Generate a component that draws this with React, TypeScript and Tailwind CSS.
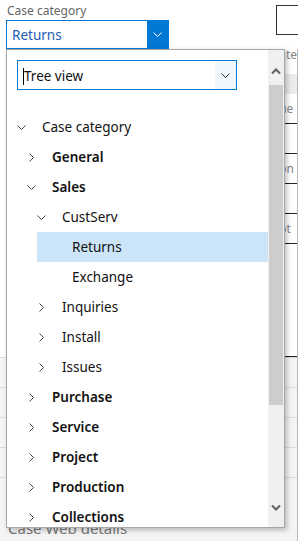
import type { ReactNode } from 'react';

type Node = { label: string; level: number; bold?: boolean; open?: boolean; leaf?: boolean; selected?: boolean };

const tree: Node[] = [
    { label: 'Case category', level: 0, open: true },
    { label: 'General', level: 1, bold: true },
    { label: 'Sales', level: 1, bold: true, open: true },
    { label: 'CustServ', level: 2, open: true },
    { label: 'Returns', level: 3, leaf: true, selected: true },
    { label: 'Exchange', level: 3, leaf: true },
    { label: 'Inquiries', level: 2 },
    { label: 'Install', level: 2 },
    { label: 'Issues', level: 2 },
    { label: 'Purchase', level: 1, bold: true },
    { label: 'Service', level: 1, bold: true },
    { label: 'Project', level: 1, bold: true },
    { label: 'Production', level: 1, bold: true },
    { label: 'Collections', level: 1, bold: true },
];

const indent = ['ml-0', 'ml-[10px]', 'ml-[20px]', 'ml-[30px]'];

function ChevronDown({ className = '' }: { className?: string }) {
    return (
        <svg width="9" height="5" viewBox="0 0 9 5" fill="none" stroke="currentColor" strokeWidth="1" className={className}>
            <polyline points="0.5 0.5 4.5 4.5 8.5 0.5" />
        </svg>
    );
}

function ChevronRight({ className = '' }: { className?: string }) {
    return (
        <svg width="5" height="9" viewBox="0 0 5 9" fill="none" stroke="currentColor" strokeWidth="1" className={className}>
            <polyline points="0.5 0.5 4.5 4.5 0.5 8.5" />
        </svg>
    );
}

function TreeRow({ node }: { node: Node }) {
    let icon: ReactNode = null;
    if (!node.leaf) icon = node.open ? <ChevronDown /> : <ChevronRight className="ml-[2px]" />;
    return (
        <div
            className={`h-[30px] flex items-center pl-[10px] ${indent[node.level]} ${node.selected ? 'bg-[#cce4f7]' : ''}`}
        >
            <span className="w-[25px] flex items-center text-[#444]">{icon}</span>
            <span className={`text-[13.5px] text-[#111] ${node.bold ? 'font-semibold' : ''}`}>{node.label}</span>
        </div>
    );
}

export default function App() {
    return (
        <div className="relative w-[298px] h-[541px] overflow-hidden bg-white font-['Segoe_UI','Noto_Sans',sans-serif]">
            {/* page behind the popup */}
            <div className="flex">
                <div className="w-[276px] pl-[6px] pt-[3px]">
                    <div className="pl-[1px] text-[12px] leading-[16px] text-[#666]">Case category</div>
                    <div className="mt-[1px] w-[163px] h-[29px] border border-[#0078d4] flex items-stretch">
                        <span className="flex-1 pl-[5px] pt-[2px] flex items-center text-[13.5px] text-[#1e5cb3]">Returns</span>
                        <span className="w-[21px] bg-[#0078d4] flex items-center justify-center text-white">
                            <ChevronDown />
                        </span>
                    </div>
                </div>
                <div className="flex-1 mt-[5px] h-[30px] border border-[#333] border-r-0 bg-white" />
            </div>

            <div className="flex h-[308px]">
                <div className="w-[285px]" />
                <div className="flex-1 flex flex-col text-[12px] leading-[12px] text-[#888] border-r border-[#bbb]">
                    <div className="h-[25px]">ate</div>
                    <div className="h-[20px] bg-[#ebebeb]" />
                    <div className="h-[30px] flex items-center border-b border-[#222]">ue</div>
                    <div className="h-[30px] border-b border-[#222]" />
                    <div className="h-[30px] flex items-center border-b border-[#222]">on</div>
                    <div className="h-[30px] border-b border-[#222]" />
                    <div className="h-[30px] flex items-center border-b border-[#222]">ot</div>
                    <div className="flex-1 border-b border-[#222]" />
                </div>
            </div>

            <div className="bg-[#f4f4f4] border-r border-[#bbb] h-[184px]">
                {[0, 1, 2, 3, 4].map((i) => (
                    <div key={i} className="h-[30px] border-t border-[#dcdcdc]" />
                ))}
                <div className="pl-[8px] pt-[11px] text-[15px] leading-[20px] text-[#777]">Case Web details</div>
            </div>

            {/* dropdown popup */}
            <div className="absolute left-[6px] top-[49px] w-[279px] h-[479px] bg-white border border-[#a6a6a6] shadow-[2px_2px_5px_rgba(0,0,0,0.25)] flex overflow-hidden">
                <div className="flex-1 flex flex-col">
                    <div className="pt-[10px] pl-[10px]">
                        <div className="w-[220px] h-[30px] border border-[#0078d4] flex items-stretch">
                            <span className="flex-1 flex items-center pl-[5px] pt-[2px] text-[13.5px] text-[#111]">
                                <span className="w-px h-[17px] bg-black" />
                                Tree view
                            </span>
                            <span className="w-[21px] bg-[#eff6fc] flex items-center justify-center text-[#333]">
                                <ChevronDown />
                            </span>
                        </div>
                    </div>
                    <div className="mt-[22px]">
                        {tree.map((n) => (
                            <TreeRow key={n.label} node={n} />
                        ))}
                    </div>
                </div>
                <div className="w-[16px] flex flex-col bg-[#f0f0f0]">
                    <div className="h-[35px] flex justify-center pt-[18px] text-[#606060]">
                        <svg width="10" height="6" viewBox="0 0 10 6" fill="none" stroke="currentColor" strokeWidth="2">
                            <polyline points="1 5.5 5 1.5 9 5.5" />
                        </svg>
                    </div>
                    <div className="h-[320px] mx-[1px] bg-[#cdcdcd]" />
                    <div className="flex-1" />
                    <div className="h-[22px] flex justify-center text-[#606060]">
                        <svg width="10" height="6" viewBox="0 0 10 6" fill="none" stroke="currentColor" strokeWidth="2">
                            <polyline points="1 0.5 5 4.5 9 0.5" />
                        </svg>
                    </div>
                </div>
            </div>
        </div>
    );
}
